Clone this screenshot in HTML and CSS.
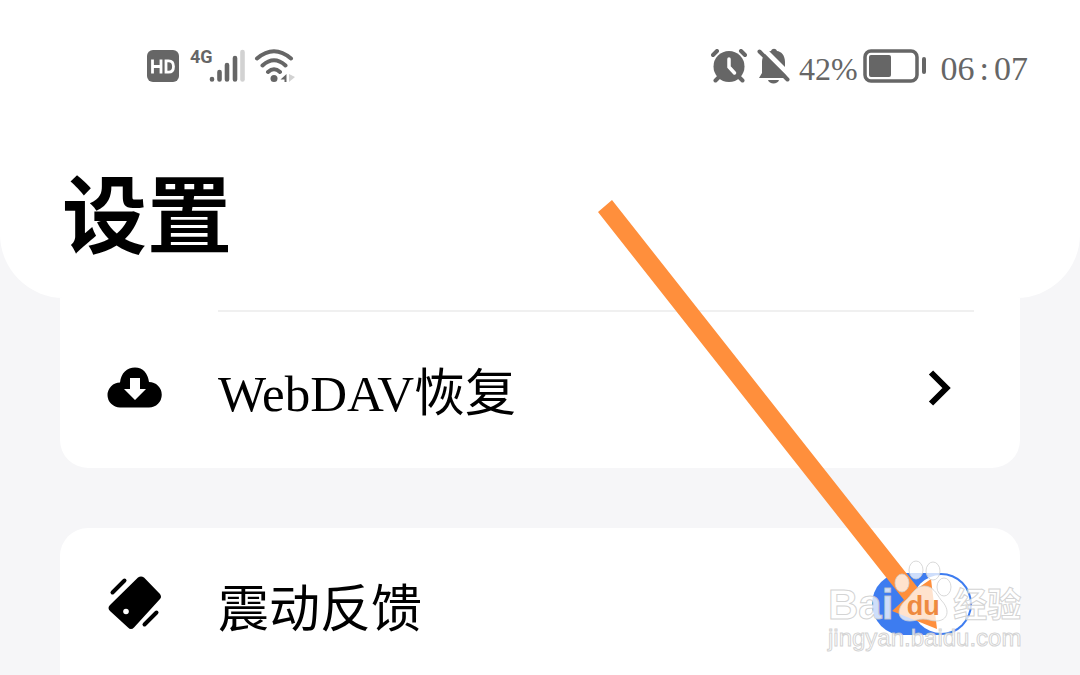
FILE: index.html
```html
<!DOCTYPE html>
<html lang="zh-CN">
<head>
    <meta charset="UTF-8">
    <meta name="viewport" content="width=device-width, initial-scale=1.0">
    <title>设置</title>
    <link rel="stylesheet" href="styles.css">
</head>
<body>
    <header class="header">
        <div class="status-bar">
            <div class="status-group">
                <svg class="icon-hd" width="32" height="32" viewBox="0 0 32 32" aria-hidden="true">
                    <rect width="32" height="32" rx="6" fill="#666"/>
                    <path d="M5.500 9.500v14M14 9.500v14M5.500 16.500H14M19 10.800v11.400h2.500c3.500 0 5-2 5-5.700s-1.500-5.700-5-5.700z" fill="none" stroke="#fff" stroke-width="2.800"/>
                </svg>
                <span class="network">4G</span>
                <svg class="icon-signal" width="36" height="34" viewBox="0 0 36 34" aria-hidden="true">
                    <g fill="none" stroke="#666" stroke-width="4.600" stroke-linecap="round">
                        <path d="M3 30.500V30M10.500 30.500V23M18 30.500V16M26 30.500V9"/>
                        <path d="M33.500 30.500V3" stroke="#d2d2d2"/>
                    </g>
                </svg>
                <svg class="icon-wifi" width="42" height="36" viewBox="0 0 42 36" aria-hidden="true">
                    <g fill="none" stroke="#666" stroke-width="4" stroke-linecap="round">
                        <path d="M3 10.500Q20 -4 37 10.500M8.500 17.500Q20 7 31.500 17.500M14 24Q20 18.500 26 24"/>
                    </g>
                    <circle cx="20" cy="30.500" r="3.500" fill="#666"/>
                    <path d="M32.500 26v8h-2v-2.500H26.500z" fill="#666"/>
                    <path d="M35 26l6 3-6 5z" fill="#d2d2d2"/>
                </svg>
            </div>
            <div class="status-group">
                <svg class="icon-alarm" width="36" height="34" viewBox="0 0 36 34" aria-hidden="true">
                    <path d="M2 6l4-4M34 6l-4-4M4.500 31.500L9 27M31.500 31.500L27 27" stroke="#666" stroke-width="4" stroke-linecap="round"/>
                    <circle cx="18" cy="17.500" r="15.500" fill="#666"/>
                    <path d="M18 10v8l5.500 6" fill="none" stroke="#fff" stroke-width="3.500" stroke-linecap="round"/>
                </svg>
                <svg class="icon-muted" width="34" height="36" viewBox="0 0 34 36" aria-hidden="true">
                    <path d="M2 30l3-5V14C5 7 10 3.500 14 3c1-3 5-3 6 0 4 .5 8 4 8 11v11l3 5zM11 32h11c-1 4.500-10 4.500-11 0z" fill="#666"/>
                    <path d="M5-.500L34 28.500" stroke="#fff" stroke-width="5"/>
                    <path d="M2.500 3.500l28 28" stroke="#666" stroke-width="4" stroke-linecap="round"/>
                </svg>
                <span class="percent">42%</span>
                <svg class="icon-battery" width="64" height="34" viewBox="0 0 64 34" aria-hidden="true">
                    <rect x="2" y="2" width="52" height="30" rx="6" fill="none" stroke="#666" stroke-width="3.500"/>
                    <rect x="6" y="6" width="22" height="22" rx="2" fill="#666"/>
                    <path d="M61 10v13" stroke="#666" stroke-width="4" stroke-linecap="round"/>
                </svg>
                <time class="clock" datetime="06:07"><span>06</span><span>:</span><span>07</span></time>
            </div>
        </div>
        <h1 class="title">设置</h1>
    </header>

    <main class="settings">
        <section class="card card-backup">
            <a class="row" href="#webdav">
                <svg class="row-icon" width="56" height="56" viewBox="0 0 56 56" aria-hidden="true">
                    <path d="M14 47.500a12.500 12.500 0 0 1 0-25C15 13 21 7.500 29 7.500s13 6 14 14.500a12.700 12.700 0 0 1 0 25.500z" fill="#000"/>
                    <path d="M24 18h10v11h6L29 40 18 29h6z" fill="#fff"/>
                </svg>
                <span class="row-label">WebDAV恢复</span>
                <svg class="chevron" width="26" height="36" viewBox="0 0 26 36" aria-hidden="true">
                    <path d="M3 2.500L18.500 18 3 33.500" fill="none" stroke="#000" stroke-width="6"/>
                </svg>
            </a>
        </section>

        <section class="card card-feedback">
            <div class="row">
                <svg class="row-icon" width="56" height="56" viewBox="0 0 56 56" aria-hidden="true">
                    <path d="M32 1.500q3-2 6 0L54 18q2 3 0 5L28 51.500q-3 3-6 0L4 35q-3-3 0-6z" fill="#000"/>
                    <circle cx="20" cy="35.500" r="2.800" fill="#fff"/>
                    <path d="M6.500 16.500L18.500 4.500M38.500 48.500l12-12" stroke="#000" stroke-width="4" stroke-linecap="round"/>
                </svg>
                <label class="row-label" for="vibration">震动反馈</label>
                <input class="switch" type="checkbox" id="vibration" checked>
            </div>
        </section>
    </main>

    <svg class="pointer" width="344" height="432" viewBox="0 0 344 432" aria-hidden="true">
        <path d="M0 12L14 0l306 388 13-9 6 50-45-18 12-11z" fill="#ff8f3c"/>
    </svg>

    <div class="watermark">
        <div class="brand">
            <span>Bai</span>
            <span class="paw">
                <svg class="paw-shape" width="60" height="64" viewBox="0 0 60 64" aria-hidden="true">
                    <g fill="#fff" fill-opacity=".75" stroke="#cfcfcf" stroke-opacity=".8">
                        <ellipse cx="9" cy="23" rx="7" ry="9"/>
                        <ellipse cx="23" cy="10" rx="7" ry="9"/>
                        <ellipse cx="40" cy="11" rx="7" ry="9"/>
                        <ellipse cx="51" cy="27" rx="7" ry="9"/>
                        <path d="M31 26c9 0 12 7 17 14 10 10 7 21-5 21-5 0-8-2-13-2s-8 2-13 2C4 61 3 49 12 41c7-6 10-15 19-15z"/>
                    </g>
                </svg>
                <span class="du">du</span>
            </span>
            <span class="brand-cn">经验</span>
        </div>
        <div class="site">jingyan.baidu.com</div>
    </div>
</body>
</html>
```
FILE: styles.css
```css
:root {
    --page: #f6f6f8;
    --white: #ffffff;
    --ink: #000000;
    --status: #666666;
    --blue: #3d7cf0;
    --line: #f0f0f0;
}

* {
    margin: 0;
    padding: 0;
    box-sizing: border-box;
}

body {
    position: relative;
    display: flex;
    flex-direction: column;
    min-height: 100vh;
    background: var(--page);
    color: var(--ink);
    font-family: "Liberation Serif", "Noto Sans CJK SC", serif;
}

.header {
    padding: 46px 52px 38px 62px;
    background: var(--white);
    border-radius: 0 0 64px 64px;
}

.status-bar {
    display: flex;
    justify-content: space-between;
    align-items: center;
    height: 40px;
    padding-left: 85px;
    color: var(--status);
}

.status-group {
    display: flex;
    align-items: center;
}

.network {
    align-self: flex-start;
    margin-left: 11px;
    font: bold 18px/18px "Roboto", sans-serif;
}

.icon-signal {
    margin-left: -4px;
}

.icon-wifi {
    margin-left: 9px;
}

.icon-muted {
    margin-left: 10px;
}

.percent {
    margin: 6px 5px 0 8px;
    font-size: 32px;
    line-height: 36px;
}

.clock {
    display: flex;
    gap: 5px;
    margin: 6px 0 0 14px;
    font-size: 34px;
    line-height: 36px;
}

.title {
    margin-top: 74px;
    font: bold 85px/100px "Noto Sans CJK SC", sans-serif;
}

.settings {
    display: flex;
    flex: 1;
    flex-direction: column;
    gap: 60px;
    padding: 0 60px;
}

.card {
    padding: 0 46px;
    background: var(--white);
}

.card-backup {
    padding-top: 12px;
    padding-bottom: 10px;
    border-radius: 0 0 28px 28px;
}

.card-backup::before {
    content: "";
    display: block;
    height: 2px;
    margin: 0 0 6px 112px;
    background: var(--line);
}

.card-feedback {
    flex: 1;
    padding-top: 6px;
    border-radius: 28px 28px 0 0;
}

.row {
    display: flex;
    align-items: center;
    height: 140px;
    color: inherit;
    text-decoration: none;
}

.row-icon {
    flex: none;
    margin-right: 56px;
    overflow: visible;
}

.row-label {
    flex: 1;
    padding-top: 12px;
    font-size: 51px;
    line-height: 72px;
}

.chevron {
    margin-right: 20px;
}

.switch {
    appearance: none;
    display: flex;
    justify-content: flex-end;
    width: 100px;
    height: 62px;
    margin-right: 2px;
    padding: 2px;
    border-radius: 31px;
    background: var(--blue);
}

.switch::before {
    content: "";
    width: 58px;
    height: 58px;
    border-radius: 50%;
    background: var(--white);
}

.pointer {
    position: absolute;
    top: 200px;
    left: 598px;
}

.watermark {
    position: absolute;
    top: 560px;
    right: 58px;
    width: 194px;
    color: rgba(255, 255, 255, 0.75);
    font-family: "Liberation Sans", "Noto Sans CJK SC", sans-serif;
    -webkit-text-stroke: 1px rgba(200, 200, 200, 0.8);
    pointer-events: none;
}

.brand {
    display: flex;
    align-items: flex-end;
    height: 64px;
    font-size: 42px;
    font-weight: bold;
    line-height: 38px;
}

.paw {
    display: grid;
    flex: none;
    place-items: end center;
}

.paw-shape,
.du {
    grid-area: 1 / 1;
}

.du {
    padding-bottom: 3px;
    color: #ee8a40;
    font-size: 27px;
    line-height: 30px;
    -webkit-text-stroke: 0;
}

.brand-cn {
    font-size: 34px;
}

.site {
    font-size: 24px;
    line-height: 28px;
}
```
